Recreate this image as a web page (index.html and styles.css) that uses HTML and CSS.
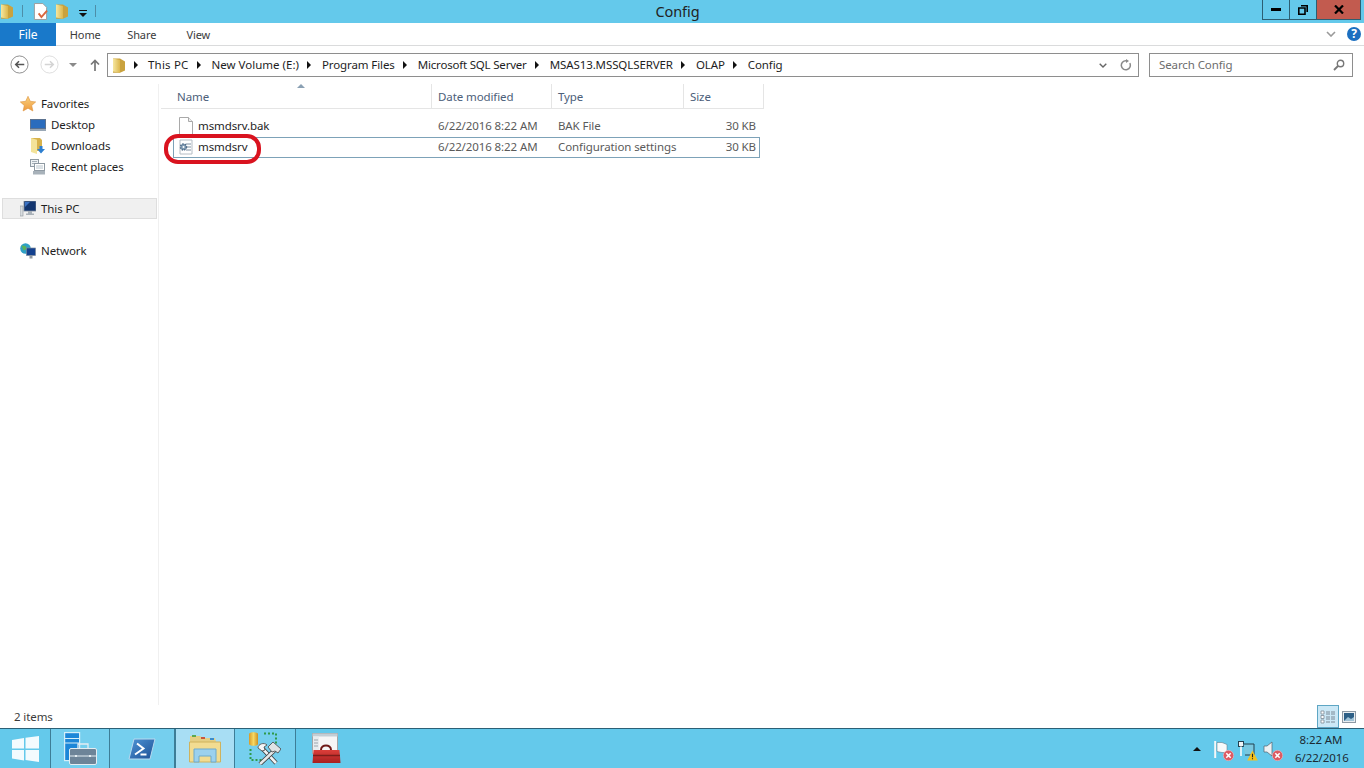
FILE: index.html
```html
<!DOCTYPE html>
<html lang="en">
<head>
<meta charset="utf-8">
<title>Config</title>
<link rel="stylesheet" href="styles.css">
</head>
<body>
<svg class="defs" width="0" height="0">
  <defs>
    <linearGradient id="fold" x1="0" y1="0" x2="1" y2="0"><stop offset="0" stop-color="#f6e7a0"/><stop offset="1" stop-color="#dcb74e"/></linearGradient>
    <linearGradient id="red" x1="0" y1="0" x2="0" y2="1"><stop offset="0" stop-color="#dc3f3a"/><stop offset="1" stop-color="#a81f20"/></linearGradient>
    <linearGradient id="star" x1="0" y1="0" x2="0" y2="1"><stop offset="0" stop-color="#f9d27f"/><stop offset="1" stop-color="#ee9a3e"/></linearGradient>
    <linearGradient id="ps" x1="0" y1="0" x2="1" y2="1"><stop offset="0" stop-color="#4f95d6"/><stop offset="1" stop-color="#1c4f94"/></linearGradient>
    <linearGradient id="db" x1="0" y1="0" x2="1" y2="0"><stop offset="0" stop-color="#d79a2a"/><stop offset=".5" stop-color="#f6d964"/><stop offset="1" stop-color="#cc9023"/></linearGradient>
    <symbol id="folder" viewBox="0 0 14 16">
      <path d="M1 1.500h7l5 3v9l-5 2.200H1z" fill="#c9a23e"/>
      <path d="M1 1.500l7 1.600v12.600L1 14.500z" fill="url(#fold)"/>
    </symbol>
    <symbol id="page" viewBox="0 0 16 18">
      <path d="M1.500.5h9l4 4v13h-13z" fill="#fff" stroke="#a9a9a9"/>
      <path d="M10.500.5v4h4" fill="#eee" stroke="#a9a9a9"/>
    </symbol>
    <symbol id="err" viewBox="0 0 10 10">
      <circle cx="5" cy="5" r="4.700" fill="#dd5a62" stroke="#f3c7ca" stroke-width=".5"/>
      <path d="M3 3l4 4M7 3l-4 4" stroke="#fff" stroke-width="1.400"/>
    </symbol>
  </defs>
</svg>

<header class="titlebar">
  <div class="qat">
    <svg class="qat-folder"><use href="#folder"/></svg>
    <span class="qat-sep"></span>
    <svg class="qat-prop" viewBox="0 0 16 18">
      <path d="M1.500.5h9l4 4v13h-13z" fill="#fff" stroke="#9a9a9a"/>
      <path d="M6 11l3 4 6-7" fill="none" stroke="#d9663c" stroke-width="2"/>
    </svg>
    <svg class="qat-folder qat-folder2"><use href="#folder"/></svg>
    <svg class="qat-more" viewBox="0 0 8 8"><path d="M0 1h8v1H0zM0 4h8L4 8z" fill="#111"/></svg>
    <span class="qat-sep qat-sep2"></span>
  </div>
  <div class="title">Config</div>
  <div class="caption">
    <button class="cap cap-min"><svg width="10" height="3" viewBox="0 0 10 3"><rect width="10" height="3" fill="#000"/></svg></button>
    <button class="cap cap-max"><svg width="10" height="10" viewBox="0 0 10 10"><path d="M3 .8h6.200V7M.8 3h6.200v6.200H.8z" fill="none" stroke="#000" stroke-width="1.600"/></svg></button>
    <button class="cap cap-close"><svg width="10" height="9" viewBox="0 0 10 9"><path d="M1 .5l8 8M9 .5l-8 8" stroke="#000" stroke-width="2.200"/></svg></button>
  </div>
</header>

<nav class="ribbon">
  <div class="tab-file">File</div>
  <div class="tab">Home</div>
  <div class="tab">Share</div>
  <div class="tab">View</div>
  <div class="ribbon-right">
    <svg width="10" height="6" viewBox="0 0 10 6"><path d="M1 1l4 4 4-4" fill="none" stroke="#9a9a9a" stroke-width="1.600"/></svg>
    <span class="help">?</span>
  </div>
</nav>

<section class="addressrow">
  <div class="navbtns">
    <svg class="nav-circle" viewBox="0 0 20 20"><circle cx="10" cy="10" r="9" fill="#fff" stroke="#8a8a8a"/><path d="M15 10H6M9.500 6.500L6 10l3.500 3.500" fill="none" stroke="#555" stroke-width="1.600"/></svg>
    <svg class="nav-circle" viewBox="0 0 20 20"><circle cx="10" cy="10" r="9" fill="#fff" stroke="#dcdcdc"/><path d="M5 10h9M10.500 6.500L14 10l-3.500 3.500" fill="none" stroke="#d4d4d4" stroke-width="1.600"/></svg>
    <svg class="nav-drop" viewBox="0 0 8 4"><path d="M0 0h8L4 4z" fill="#8a8a8a"/></svg>
    <svg class="nav-up" viewBox="0 0 10 12"><path d="M5 12V2M1 5.500L5 1.500l4 4" fill="none" stroke="#777" stroke-width="1.700"/></svg>
  </div>
  <div class="addressbar">
    <svg class="addr-folder"><use href="#folder"/></svg>
    <ol class="crumbs">
      <li class="crumb-wide">This PC</li>
      <li class="crumb-mid">New Volume (E:)</li>
      <li>Program Files</li>
      <li class="crumb-tight">Microsoft SQL Server</li>
      <li>MSAS13.MSSQLSERVER</li>
      <li>OLAP</li>
      <li>Config</li>
    </ol>
    <svg class="addr-chev" viewBox="0 0 8 5"><path d="M.7.7L4 4 7.300.7" fill="none" stroke="#666" stroke-width="1.400"/></svg>
    <svg class="addr-refresh" viewBox="0 0 12 12"><path d="M9.800 4.200A4.500 4.500 0 1 1 6 1.800" fill="none" stroke="#8a8a8a" stroke-width="1.500"/><path d="M6 0l3 2-3 2z" fill="#8a8a8a"/></svg>
  </div>
  <div class="searchbox">
    <span>Search Config</span>
    <svg class="search-ic" viewBox="0 0 12 12"><circle cx="7.500" cy="4.500" r="3.200" fill="none" stroke="#777" stroke-width="1.400"/><path d="M5 7l-4 4" stroke="#777" stroke-width="1.800"/></svg>
  </div>
</section>

<main class="body">
  <aside class="navpane">
    <div class="nav-group">
      <div class="nav-item nav-top">
        <svg class="nav-ic" viewBox="0 0 16 16"><path d="M8 .3l2.300 5 5.400.6-4 3.600 1.200 5.500L8 12.200 3.100 15l1.200-5.500-4-3.600 5.400-.6z" fill="url(#star)" stroke="#dd9440" stroke-width=".6"/></svg>
        <span>Favorites</span>
      </div>
      <div class="nav-item nav-sub">
        <svg class="nav-ic" viewBox="0 0 16 16"><rect y="2" width="16" height="11" fill="#5b7290"/><rect x="1" y="3" width="14" height="8" fill="#2a6cbd"/><rect y="12" width="16" height="2" fill="#9aa8b6"/></svg>
        <span>Desktop</span>
      </div>
      <div class="nav-item nav-sub">
        <svg class="nav-ic" viewBox="0 0 16 16"><path d="M1 0h9l2 2v11H1z" fill="#d7b24c"/><path d="M1 0l6 1.800V16L1 14z" fill="#f3e39a"/><path d="M9.500 8h3v3h2.500l-4 4.500-4-4.500h2.500z" fill="#2d7fd0"/></svg>
        <span>Downloads</span>
      </div>
      <div class="nav-item nav-sub">
        <svg class="nav-ic" viewBox="0 0 16 16"><rect x=".5" y=".5" width="8" height="7" fill="#eef2f4" stroke="#8f9aa3"/><path d="M2 2.500h5M2 4.500h5" stroke="#a8b2ba"/><rect x="4.500" y="4.500" width="10" height="7" fill="#fff" stroke="#8f9aa3"/><path d="M6 7h7M6 9h7" stroke="#b8c4cc"/><rect x="3" y="12" width="12" height="3.500" fill="#a8b2ba"/></svg>
        <span>Recent places</span>
      </div>
    </div>
    <div class="nav-group nav-pc">
      <div class="nav-item nav-top nav-selected">
        <svg class="nav-ic" viewBox="0 0 16 16"><rect y="5" width="3" height="10" fill="#d8dcdf" stroke="#8c949b" stroke-width=".6"/><rect x="4" y="0" width="12" height="10" fill="#12356f" stroke="#7a8899" stroke-width=".8"/><path d="M5 1h5L5 6z" fill="#3a72c4"/><path d="M8 10h4v2.500h2V14H6v-1.500h2z" fill="#a9b1b8"/></svg>
        <span>This PC</span>
      </div>
    </div>
    <div class="nav-group nav-net">
      <div class="nav-item nav-top">
        <svg class="nav-ic" viewBox="0 0 16 16"><circle cx="5.500" cy="5.500" r="5.300" fill="#2fa0c6"/><path d="M1.500 2.500l4 .5 1.500 3-3.500 1.500z" fill="#5db35a"/><rect x="6.500" y="5" width="9" height="7.500" fill="#14418f" stroke="#7a8899" stroke-width=".7"/><rect x="9.500" y="12.500" width="3" height="3" fill="#8f98a0"/></svg>
        <span>Network</span>
      </div>
    </div>
  </aside>

  <section class="files">
    <div class="headers">
      <div class="col col-name">Name<span class="sort"></span></div>
      <div class="col col-date">Date modified</div>
      <div class="col col-type">Type</div>
      <div class="col col-size">Size</div>
    </div>
    <div class="row">
      <div class="cell-name"><svg class="file-ic"><use href="#page"/></svg><span>msmdsrv.bak</span></div>
      <div class="cell-date">6/22/2016 8:22 AM</div>
      <div class="cell-type">BAK File</div>
      <div class="cell-size">30 KB</div>
    </div>
    <div class="row row-focus">
      <div class="cell-name">
        <svg class="file-ic" viewBox="0 0 16 16">
          <path d="M2 1h12v14H2z" fill="#fff" stroke="#b4bcc4"/>
          <path d="M8 5h5M9 8h4M8 11h5" stroke="#7d8ea0"/>
          <circle cx="5.500" cy="8" r="3" fill="#7f9ab3" stroke="#4f6c88" stroke-dasharray="1.500 1" stroke-width="1.400"/>
          <circle cx="5.500" cy="8" r="1" fill="#fff"/>
        </svg>
        <span>msmdsrv</span>
      </div>
      <div class="cell-date">6/22/2016 8:22 AM</div>
      <div class="cell-type">Configuration settings</div>
      <div class="cell-size">30 KB</div>
      <div class="annotation"></div>
    </div>
  </section>
</main>

<footer class="statusbar">
  <span class="count">2 items</span>
  <div class="views">
    <span class="view view-on">
      <svg width="16" height="14" viewBox="0 0 16 14"><path d="M1 1h3v3H1zM1 5.500h3v3H1zM1 10h3v3H1z" fill="#fff" stroke="#7d8a96" stroke-width=".8"/><path d="M6 2h4M11 2h4M6 4h4M11 4h4M6 7h4M11 7h4M6 9h4M11 9h4M6 12h4M11 12h4" stroke="#7d8a96"/></svg>
    </span>
    <span class="view">
      <svg width="14" height="12" viewBox="0 0 14 12"><rect x=".5" y=".5" width="13" height="11" fill="#e9edf0" stroke="#8d99a4"/><rect x="2" y="2" width="10" height="8" fill="#2d5f86"/><path d="M2 10l4-4 3 2 3-2v4z" fill="#9fc2d6"/></svg>
    </span>
  </div>
</footer>

<div class="taskbar">
  <div class="start">
    <svg width="27" height="26" viewBox="0 0 27 26"><path d="M0 4l12-2v10.500H0zM13.500 1.700L27 0v12.500H13.500zM0 14h12v10.500L0 22.500zM13.500 14H27v12l-13.500-2z" fill="#fff" fill-opacity=".92"/></svg>
  </div>
  <div class="task task-sm">
    <svg width="33" height="34" viewBox="0 0 33 34"><rect x=".6" y=".6" width="15" height="28" fill="#1c86d8" stroke="#d4eef8" stroke-width="1.200"/><path d="M1 6.500h15M1 11h15" stroke="#d4eef8"/><rect x="5.500" y="16.500" width="27" height="16" rx="1.500" fill="#6d8498" stroke="#e4edf2"/><path d="M14 16v-4h10v4" fill="none" stroke="#e4edf2" stroke-width="1.300"/><path d="M6 24h26" stroke="#e4edf2"/><path d="M11 23h2v2h-2zM25 23h2v2h-2z" fill="#e4edf2"/></svg>
  </div>
  <div class="task task-ps">
    <svg width="28" height="22" viewBox="0 0 28 22"><path d="M6 1h21l-5 20H1z" fill="url(#ps)" stroke="#b9d9ef"/><path d="M9 5.500l6.500 5-8.500 6" fill="none" stroke="#fff" stroke-width="2"/><path d="M12.500 16.500h6" stroke="#fff" stroke-width="2"/></svg>
  </div>
  <div class="task task-active">
    <svg width="32" height="29" viewBox="0 0 32 29"><path d="M1 2h10l2 2h13l1 4H1z" fill="#e5cf84"/><rect x="3" y="1" width="4" height="2" fill="#5da94f"/><rect x="12" y="3" width="4" height="2" fill="#c8563d"/><rect x="21" y="4" width="4" height="2" fill="#3b8ccc"/><path d="M.5 8h31v20H.5z" fill="#f2dc91" stroke="#cfb25d"/><path d="M5 15h22v13h-5v-6H10v6H5z" fill="#9cd1ee" stroke="#6faacb"/></svg>
  </div>
  <div class="task task-db">
    <svg width="32" height="33" viewBox="0 0 32 33"><path d="M0 2c0-2.400 9-2.400 9 0v10c0 2.400-9 2.400-9 0z" fill="url(#db)"/><path d="M15 1.500h12v12M1.500 17v11h11" fill="none" stroke="#2f9a4a" stroke-width="2" stroke-dasharray="2 2"/>
      <path d="M12 15l15 16" stroke="#3a3a3a" stroke-width="4.200"/><path d="M12 15l15 16" stroke="#f0f3f4" stroke-width="2.600"/>
      <path d="M27 17L11 32" stroke="#3a3a3a" stroke-width="4.200"/><path d="M27 17L11 32" stroke="#e6e9ea" stroke-width="2.600"/>
      <path d="M9 16c0-4 6-6 9-3l-3 2 1 3-3 1z" fill="#f4f6f7" stroke="#444" stroke-width=".8"/>
      <path d="M19 15l5-5 8 7-3 4-3-2-3 1z" fill="#dfe3e5" stroke="#444" stroke-width=".8"/></svg>
  </div>
  <div class="task task-tool">
    <svg width="29" height="31" viewBox="0 0 29 31"><rect x=".5" y=".5" width="25" height="20" fill="#f6f6f6" stroke="#a4a4a4"/><rect x=".5" y=".5" width="25" height="3" fill="#c3ced5"/><rect x="1" y="3.500" width="6" height="17" fill="#e7ecef"/><path d="M2 7h4M2 10h4M2 13h4" stroke="#9aa5ad"/><path d="M1.500 17h26l1 13H.5z" fill="url(#red)"/><path d="M9 17c0-6 10-6 10 0" fill="none" stroke="#6e1a18" stroke-width="2"/><path d="M1 22.500h27" stroke="#7d1d1a" stroke-width="1.500"/></svg>
  </div>
  <div class="tray">
    <svg class="tray-up" viewBox="0 0 8 4"><path d="M0 4h8L4 0z" fill="#111"/></svg>
    <div class="tray-ic tray-gap">
      <svg width="16" height="17" viewBox="0 0 16 17"><path d="M1.200 0v17" stroke="#f4f7f8" stroke-width="2"/><path d="M3 1.500h5l5 2v8H8l-5-1z" fill="#f7f9fa" stroke="#566c7b" stroke-width=".5"/></svg>
      <svg class="tray-badge" viewBox="0 0 10 10"><use href="#err"/></svg>
    </div>
    <div class="tray-ic tray-gap2">
      <svg width="17" height="16" viewBox="0 0 17 16"><rect x=".5" y=".5" width="5" height="5" fill="#eef4f7" stroke="#23404f"/><path d="M5.500 3h10.500v11H7" fill="#79c8e0" stroke="#23404f"/><path d="M3 5.500V15" stroke="#eef4f7" stroke-width="1.800"/></svg>
      <svg class="tray-badge" viewBox="0 0 10 10"><path d="M5 .5l4.800 9H.2z" fill="#f3c21f"/><path d="M5 3.500v3M5 7.500v1" stroke="#222"/></svg>
    </div>
    <div class="tray-ic">
      <svg width="16" height="16" viewBox="0 0 16 16"><path d="M1 5h3l5-4v14l-5-4H1z" fill="#eef2f4" stroke="#51616d" stroke-width=".7"/></svg>
      <svg class="tray-badge" viewBox="0 0 10 10"><use href="#err"/></svg>
    </div>
    <div class="clock"><div>8:22 AM</div><div>6/22/2016</div></div>
  </div>
</div>
</body>
</html>
```

FILE: styles.css
```css
* { box-sizing: border-box; }
html, body { margin: 0; padding: 0; }
body {
  width: 1364px;
  height: 768px;
  overflow: hidden;
  display: flex;
  flex-direction: column;
  background: #fff;
  color: #1e1e1e;
  font: 11.5px/16px "Noto Sans", "Open Sans", sans-serif;
  letter-spacing: -0.1px;
}
.defs { position: absolute; }
svg { display: block; flex: none; }

/* Title bar */
.titlebar {
  height: 23px;
  background: #64c9eb;
  display: flex;
  position: relative;
  flex: none;
}
.qat { display: flex; align-items: flex-start; width: 200px; }
.qat-folder { width: 14px; height: 16px; margin-top: 3px; }
.qat-sep { width: 1px; height: 12px; background: #4d8ea8; margin: 5px 0 0 8px; }
.qat-prop { width: 15px; height: 17px; margin: 3px 0 0 10px; }
.qat-folder2 { margin-left: 7px; }
.qat-more { width: 8px; height: 8px; margin: 9px 0 0 10px; }
.qat-sep2 { margin-left: 8px; }
.title {
  position: absolute;
  left: 0; right: 9px; top: 1px;
  text-align: center;
  font-size: 14.5px;
  line-height: 20px;
  color: #222;
}
.caption { margin-left: auto; display: flex; margin-right: 3px; position: relative; height: 20px; }
.cap {
  border: 1px solid #2c5f73;
  border-top: 0;
  border-right: 0;
  padding: 0;
  background: transparent;
  display: flex;
  align-items: center;
  justify-content: center;
  height: 20px;
}
.cap-min { width: 27px; }
.cap-max { width: 27px; }
.cap-close { width: 45px; background: #c25b4f; border-right: 1px solid #2c5f73; }

/* Ribbon tabs */
.ribbon { height: 23px; flex: none; display: flex; align-items: stretch; border-bottom: 1px solid #dadbdc; }
.tab-file { width: 56px; margin-right: 1px; background: #1979ca; color: #fff; text-align: center; line-height: 23px; height: 23px; font-size: 12px; }
.tab { line-height: 24px; font-size: 11px; color: #3b3b3b; width: 56.5px; text-align: center; }
.ribbon-right { margin-left: auto; display: flex; align-items: center; gap: 11px; padding-right: 3px; }
.help {
  width: 14px; height: 14px; border-radius: 50%;
  background: #1c6fc0; color: #fff; font-weight: 700; font-size: 12px; line-height: 14px; text-align: center;
}

/* Address row */
.addressrow { height: 38px; flex: none; display: flex; align-items: flex-start; padding-top: 7px; }
.navbtns { width: 107px; flex: none; display: flex; align-items: center; height: 23px; padding-left: 10px; }
.nav-circle { width: 19px; height: 19px; margin-right: 11px; }
.nav-drop { width: 8px; height: 4px; margin-left: -1px; }
.nav-up { width: 10px; height: 12px; margin-left: 13px; }
.addressbar {
  width: 1032px; height: 24px; flex: none;
  border: 1px solid #8e8e8e;
  display: flex; align-items: center;
  padding-left: 4px;
  margin-right: 10px;
}
.addr-folder { width: 14px; height: 16px; }
.crumbs { list-style: none; margin: 0; padding: 0; display: flex; flex: 1; color: #1e1e1e; }
.crumbs li { display: flex; align-items: center; margin-left: 8px; white-space: nowrap; }
.crumbs li::before {
  content: "";
  border-left: 4px solid #111;
  border-top: 4px solid transparent;
  border-bottom: 4px solid transparent;
  margin-right: 11px;
}
.crumbs li:first-child::before { margin-right: 10px; }
.crumbs .crumb-wide { letter-spacing: 0.2px; }
.crumbs .crumb-mid { letter-spacing: 0; }
.crumbs .crumb-tight { letter-spacing: -0.2px; }
.addr-chev { width: 8px; height: 5px; margin-right: 13px; }
.addr-refresh { width: 12px; height: 12px; margin-right: 6px; }
.searchbox {
  width: 204px; height: 24px; flex: none;
  border: 1px solid #8e8e8e;
  display: flex; align-items: center; justify-content: space-between;
  padding: 0 7px 0 9px;
  color: #6d6d6d;
}
.search-ic { width: 12px; height: 12px; }

/* Body */
.body { flex: 1; display: flex; min-height: 0; }
.navpane {
  width: 159px; flex: none;
  border-right: 1px solid #f0f0f0;
  padding-top: 9px;
}
.nav-item { display: flex; align-items: center; height: 21px; }
.nav-ic { width: 16px; height: 16px; }
.nav-top { padding-left: 20px; }
.nav-top .nav-ic { margin-right: 5px; }
.nav-sub { padding-left: 30px; }
.nav-sub .nav-ic { margin-right: 5px; }
.nav-pc { margin-top: 21px; }
.nav-net { margin-top: 21px; }
.nav-selected { margin: 0 1px 0 2px; padding-left: 17px; background: #f0f0f0; border: 1px solid #dedede; }

.files { flex: 1; padding-left: 2px; }
.headers { width: 603px; height: 25px; display: flex; border-bottom: 1px solid #e5e5e5; position: relative; color: #4c607a; border-right: 1px solid #e5e5e5; }
.col { padding: 5px 6px 0; height: 24px; border-right: 1px solid #e5e5e5; }
.col-name { width: 271px; padding-left: 16px; position: relative; }
.col-date { width: 120px; }
.col-type { width: 132px; }
.col-size { width: 79px; border-right: 0; }
.sort {
  position: absolute; left: 136px; top: 0;
  border-left: 4px solid transparent; border-right: 4px solid transparent;
  border-bottom: 4px solid #8aa0b3;
}
.row {
  width: 587px; height: 21px;
  margin-left: 12px;
  padding-bottom: 2px;
  display: flex; align-items: center;
  color: #5a5a5a;
  position: relative;
  border: 1px solid transparent;
}
.row:nth-child(2) { margin-top: 7px; }
.row-focus { border-color: #7da2b8; }
.cell-name { width: 264px; display: flex; align-items: center; padding-left: 4px; color: #1e1e1e; }
.file-ic { width: 16px; height: 18px; margin-right: 4px; }
.row-focus .file-ic { height: 16px; }
.cell-date { width: 120px; white-space: nowrap; }
.cell-type { width: 120px; white-space: nowrap; }
.cell-size { width: 78px; text-align: right; }
.annotation {
  position: absolute;
  left: -10px; top: -4px;
  width: 97px; height: 30px;
  border: 4px solid #d9131f;
  border-radius: 14px;
}

/* Status bar */
.statusbar { height: 23px; flex: none; display: flex; align-items: center; padding: 0 0 0 14px; color: #3b3b3b; }
.views { margin-left: auto; display: flex; align-items: center; padding-right: 5px; }
.view { width: 22px; height: 23px; display: flex; align-items: center; justify-content: center; border: 1px solid transparent; }
.view-on { background: #cbe8f6; border-color: #5ea6c4; }
.view + .view { width: 20px; }

/* Taskbar */
.taskbar {
  height: 40px; flex: none;
  background: #64c9eb;
  border-top: 1px solid #2c6076;
  display: flex; align-items: stretch;
}
.start { width: 51px; display: flex; align-items: center; justify-content: center; border-right: 1px solid #3d7d97; }
.task { display: flex; align-items: center; justify-content: center; border-right: 1px solid #3d7d97; }
.task-sm { width: 59px; background: #75cfee; }
.task-ps { width: 65px; background: #75cfee; }
.task-active { width: 60px; background: #a8def4; border-left: 1px solid #3d7d97; }
.task-db { width: 61px; background: #75cfee; }
.task-tool { width: 61px; background: transparent; border-right: 0; }
.tray { margin-left: auto; display: flex; align-items: center; padding-right: 17px; }
.tray-up { width: 8px; height: 4px; margin-right: 13px; }
.tray-ic { width: 16px; height: 16px; position: relative; }
.tray-gap { margin-right: 8px; }
.tray-gap2 { margin-right: 9px; }
.tray-badge { position: absolute; width: 11px; height: 11px; right: -4px; bottom: -4px; }
.clock { margin-left: 16px; width: 52px; white-space: nowrap; text-align: center; font-size: 11.5px; line-height: 18px; color: #1c2a33; }
```
